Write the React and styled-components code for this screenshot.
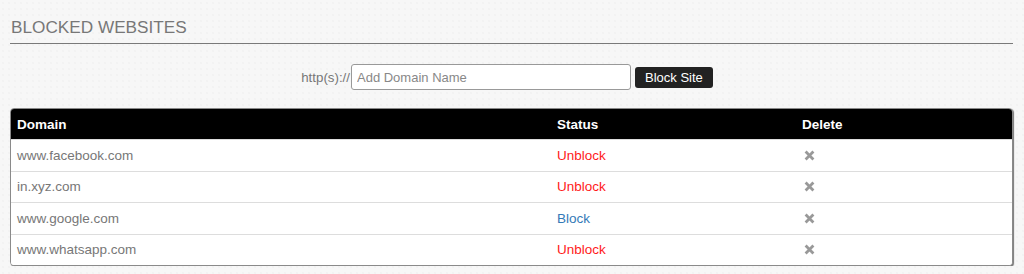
import React from 'react'
import styled, { createGlobalStyle } from 'styled-components'

const Global = createGlobalStyle`
  body {
    margin: 0;
    background-color: #f7f7f7;
    background-image: radial-gradient(#ececec 0.6px, transparent 0.8px);
    background-size: 6px 6px;
    font-family: "Liberation Sans", Arial, sans-serif;
  }
`

const Page = styled.div`
  padding: 16px 11px 0 10px;
`

const Title = styled.h2`
  margin: 0;
  padding: 0 0 5px 1px;
  font-size: 17.2px;
  font-weight: 400;
  line-height: 22px;
  color: #777;
  border-bottom: 1px solid #7a7a7a;
`

const Form = styled.form`
  display: flex;
  justify-content: center;
  align-items: center;
  margin: 20px 9px 0 0;
  height: 26px;
`

const Prefix = styled.span`
  font-size: 13.3px;
  color: #777;
`

const Input = styled.input`
  box-sizing: border-box;
  width: 280px;
  height: 26px;
  padding: 0 5px;
  margin-left: 1px;
  border: 1px solid #999;
  border-radius: 3px;
  background: #fff;
  font-family: inherit;
  font-size: 13px;
  color: #333;
  &::placeholder { color: #888; }
`

const Button = styled.button`
  height: 21px;
  margin-left: 4px;
  padding: 0 10px;
  border: 0;
  border-radius: 3px;
  background: #222;
  color: #fff;
  font-family: inherit;
  font-size: 13px;
`

const Table = styled.div`
  margin-top: 18px;
  border: 1px solid #8a8a8a;
  border-radius: 4px;
  box-shadow: 1px 1px 1px #777;
  overflow: hidden;
  background: #fff;
`

const Row = styled.div`
  box-sizing: border-box;
  display: grid;
  grid-template-columns: 540px 245px 1fr;
  align-items: center;
  height: ${p => (p.head ? '30px' : '31.5px')};
  padding-left: 6px;
  background: ${p => (p.head ? '#000' : '#fff')};
  color: ${p => (p.head ? '#fff' : '#777')};
  font-size: 13.5px;
  font-weight: ${p => (p.head ? 700 : 400)};
  & + & { border-top: 1px solid #ddd; }
`

const Status = styled.span`
  color: ${p => (p.blocked ? '#337ab7' : '#ff1a1a')};
`

const Remove = styled.span`
  display: flex;
  padding-left: 2px;
`

const Cross = () => (
  <svg width="11" height="11" viewBox="0 0 11 11">
    <path d="M1.6 1.6 L9.4 9.4 M9.4 1.6 L1.6 9.4" stroke="#999" strokeWidth="2.8" strokeLinecap="butt" />
  </svg>
)

const sites = [
  { domain: 'www.facebook.com', blocked: false },
  { domain: 'in.xyz.com', blocked: false },
  { domain: 'www.google.com', blocked: true },
  { domain: 'www.whatsapp.com', blocked: false },
]

const App = () => {
  return (
    <Page>
      <Global />
      <Title>BLOCKED WEBSITES</Title>
      <Form onSubmit={e => e.preventDefault()}>
        <Prefix>http(s)://</Prefix>
        <Input placeholder="Add Domain Name" />
        <Button>Block Site</Button>
      </Form>
      <Table>
        <Row head>
          <span>Domain</span>
          <span>Status</span>
          <span>Delete</span>
        </Row>
        {sites.map(site =>
          <Row key={site.domain}>
            <span>{site.domain}</span>
            <Status blocked={site.blocked}>{site.blocked ? 'Block' : 'Unblock'}</Status>
            <Remove><Cross /></Remove>
          </Row>
        )}
      </Table>
    </Page>
  )
}

export default App
